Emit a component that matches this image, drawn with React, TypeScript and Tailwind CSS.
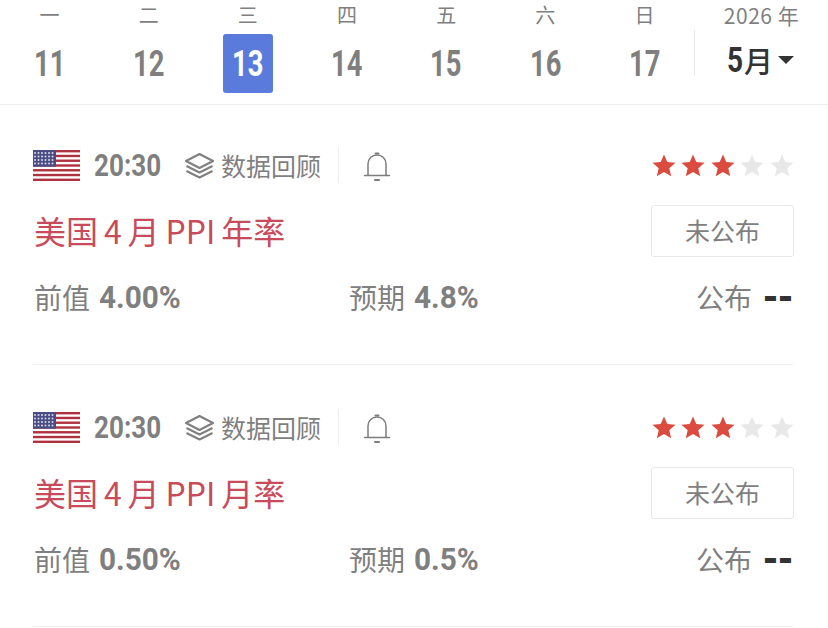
const days = [
  { w: "一", d: "11" },
  { w: "二", d: "12" },
  { w: "三", d: "13", active: true },
  { w: "四", d: "14" },
  { w: "五", d: "15" },
  { w: "六", d: "16" },
  { w: "日", d: "17" },
];

const events = [
  { title: "美国 4 月 PPI 年率", prev: "4.00%", expect: "4.8%" },
  { title: "美国 4 月 PPI 月率", prev: "0.50%", expect: "0.5%" },
];

const Flag = () => (
  <svg width="47" height="31" viewBox="0 0 47 31">
    <rect width="47" height="31" fill="#fff" />
    {[0, 2, 4, 6, 8, 10, 12].map((i) => (
      <rect key={i} x="0" y={(i * 31) / 13} width="47" height={31 / 13} fill="#b0313f" />
    ))}
    <rect width="23" height="16.7" fill="#4a4c84" />
    {[2, 5.5, 9, 12.5].map((y) =>
      [2, 5.5, 9, 12.5, 16, 19.5].map((x) => (
        <circle key={`${x}-${y}`} cx={x} cy={y + 1} r="1" fill="#d8d8e8" />
      ))
    )}
  </svg>
);

const Layers = () => (
  <svg width="31" height="28" viewBox="0 0 31 28" fill="none" stroke="#808080" strokeWidth="2.2" strokeLinejoin="round">
    <path d="M15.5 2 L29 9 L15.5 16 L2 9 Z" />
    <path d="M2.5 14 L15.5 20.5 L28.5 14" />
    <path d="M2.5 19 L15.5 25.5 L28.5 19" />
  </svg>
);

const Bell = () => (
  <svg width="28" height="31" viewBox="0 0 28 31" fill="none" stroke="#7c7c7c" strokeWidth="1.5" strokeLinecap="round">
    <path d="M5 24 V13 C5 7.5 9 4 14 4 C19 4 23 7.5 23 13 V24" />
    <path d="M1.5 24.5 H26.5" />
    <path d="M12.5 2.5 H15.5" strokeWidth="2" />
    <path d="M12 29 H16" strokeWidth="2" />
  </svg>
);

const Star = ({ on }: { on: boolean }) => (
  <svg width="24" height="23" viewBox="0 0 24 23">
    <path
      d="M12 0.5 L15.3 8 L23.5 8.8 L17.3 14.2 L19.2 22.3 L12 18 L4.8 22.3 L6.7 14.2 L0.5 8.8 L8.7 8 Z"
      fill={on ? "#dc4b3f" : "#e8e8e8"}
    />
  </svg>
);

const App = () => {
  return (
    <div className="w-[828px] h-[628px] overflow-hidden bg-white font-['Noto_Sans_CJK_SC',sans-serif] text-[#7f7f7f]">
      <div className="flex h-[105px] border-b border-[#f0f0f0]">
        <div className="grid grid-cols-7 w-[694px]">
          {days.map((day) => (
            <div key={day.d} className="flex flex-col items-center">
              <div className="h-[34px] text-[20px] leading-[30px]">{day.w}</div>
              <div
                className={
                  day.active
                    ? "flex items-center justify-center w-[50px] h-[59px] rounded-[3px] bg-[#5b7bdc] text-white"
                    : "flex items-center justify-center w-[50px] h-[59px]"
                }
              >
                <span className="inline-block scale-x-[0.76] text-[36px] font-['Roboto',sans-serif] font-bold">{day.d}</span>
              </div>
            </div>
          ))}
        </div>
        <div className="w-px h-[46px] mt-[30px] bg-[#e8e8e8]" />
        <div className="flex flex-1 flex-col items-center">
          <div className="h-[34px] text-[21px] leading-[30px] tracking-[0.5px]">2026 年</div>
          <div className="flex items-center h-[54px] text-[#333333] -ml-[2px]">
            <span className="inline-block w-[17px] origin-left scale-x-[0.8] text-[35px] font-['Roboto',sans-serif] font-bold">5</span>
            <span className="text-[29px] font-medium">月</span>
            <div className="ml-[5px] mt-[-2px] w-0 h-0 border-x-[8.5px] border-t-[8px] border-x-transparent border-t-[#333333]" />
          </div>
        </div>
      </div>

      <div className="w-[760px] ml-[33px] -mt-[2px]">
        {events.map((ev) => (
          <div key={ev.title} className="h-[262px] border-b border-[#f0f0f0] pt-[44px]">
            <div className="flex items-center justify-between h-[36px]">
              <div className="flex items-center">
                <Flag />
                <span className="inline-block ml-[14px] mt-[2px] w-[77px] origin-left scale-x-[0.84] text-[31px] font-['Roboto',sans-serif] font-bold">20:30</span>
                <span className="ml-[13px] mt-[2px]"><Layers /></span>
                <span className="ml-[6px] mt-[2px] text-[25px]">数据回顾</span>
                <div className="ml-[17px] w-px h-[36px] bg-[#efefef]" />
                <span className="ml-[24px] mt-[2px]"><Bell /></span>
              </div>
              <div className="flex gap-[5.5px] mr-[-0.5px]">
                <Star on />
                <Star on />
                <Star on />
                <Star on={false} />
                <Star on={false} />
              </div>
            </div>
            <div className="flex items-center justify-between mt-[20px] h-[54px]">
              <div className="text-[32px] text-[#c84b5c] ml-[1px] [word-spacing:-1.25px]">{ev.title}</div>
              <div className="flex items-center justify-center w-[143px] h-[52px] mr-[-1px] mt-[2px] rounded-[3px] border border-[#e8e8e8] text-[25px]">
                未公布
              </div>
            </div>
            <div className="flex items-center mt-[19px] h-[42px] text-[28px]">
              <div className="flex items-center w-[315px] ml-[1px]">
                前值
                <span className="inline-block ml-[9px] origin-left scale-x-[0.93] text-[32px] font-['Roboto',sans-serif] font-bold">{ev.prev}</span>
              </div>
              <div className="flex items-center flex-1">
                预期
                <span className="inline-block ml-[9px] origin-left scale-x-[0.93] text-[32px] font-['Roboto',sans-serif] font-bold">{ev.expect}</span>
              </div>
              <div className="flex items-center">
                公布
                <span className="ml-[11px] text-[36px] leading-none font-['DejaVu_Sans',sans-serif] font-bold text-[#333333]">--</span>
              </div>
            </div>
          </div>
        ))}
      </div>
    </div>
  );
};

export default App;
